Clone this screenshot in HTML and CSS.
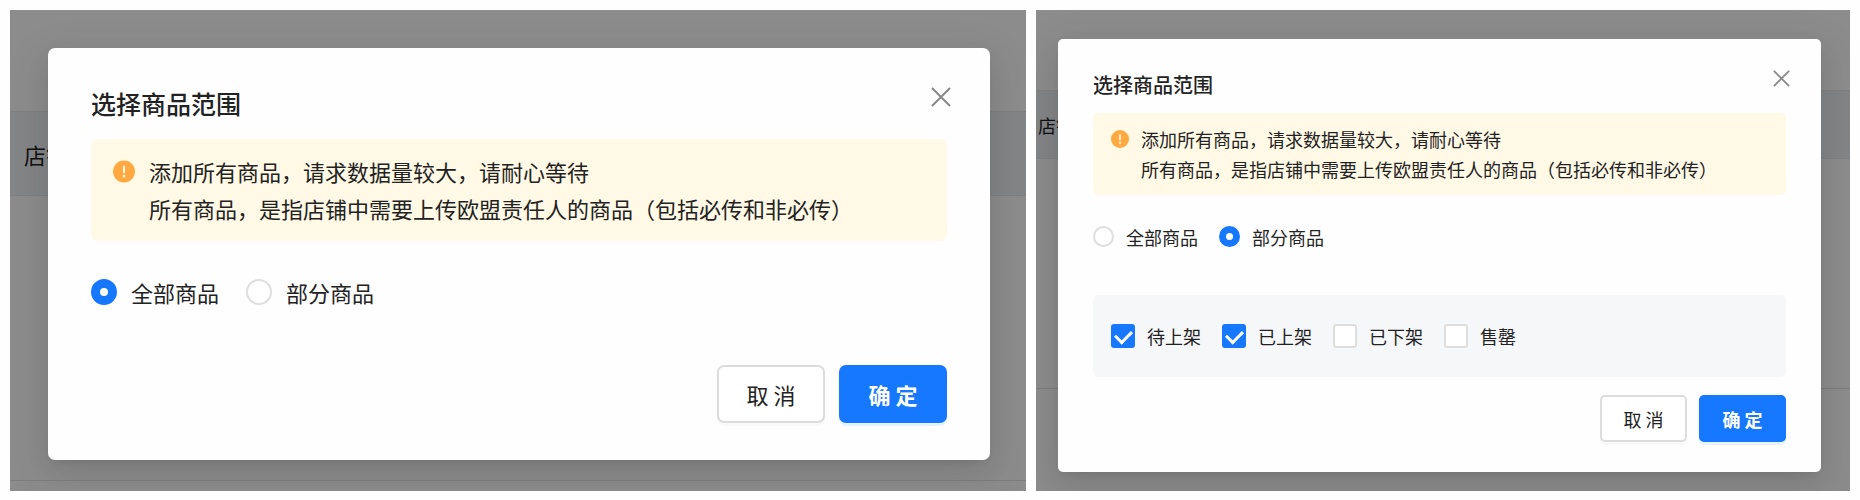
FILE: index.html
```html
<!DOCTYPE html>
<html lang="zh-CN">
  <head>
    <meta charset="UTF-8" />
    <meta name="viewport" content="width=device-width, initial-scale=1.0" />
    <title>选择商品范围</title>
    <link rel="stylesheet" href="styles.css">
  </head>
  <body>
    <div class="container">
      <section class="panel panel-large">
        <table class="shop-table">
          <thead>
            <tr><th>店铺</th></tr>
          </thead>
          <tbody>
            <tr><td></td></tr>
          </tbody>
        </table>

        <div class="mask">
          <div class="modal" role="dialog" aria-labelledby="title-all">
            <button class="close" type="button" aria-label="关闭">
              <svg viewBox="0 0 20 20"><path d="M1 1 L19 19 M19 1 L1 19" /></svg>
            </button>
            <h2 id="title-all">选择商品范围</h2>
            <div class="alert">
              <svg class="alert-icon" viewBox="0 0 22 22">
                <circle cx="11" cy="11" r="11" />
                <rect x="10" y="5" width="2" height="8" rx="1" />
                <circle class="dot" cx="11" cy="15.6" r="1.3" />
              </svg>
              <p>添加所有商品，请求数据量较大，请耐心等待<br />所有商品，是指店铺中需要上传欧盟责任人的商品（包括必传和非必传）</p>
            </div>
            <div class="options">
              <label><input type="radio" name="range-all" checked />全部商品</label>
              <label><input type="radio" name="range-all" />部分商品</label>
            </div>
            <div class="footer">
              <button class="btn" type="button">取 消</button>
              <button class="btn btn-primary" type="button">确 定</button>
            </div>
          </div>
        </div>
      </section>

      <section class="panel panel-small">
        <table class="shop-table">
          <thead>
            <tr><th>店铺</th></tr>
          </thead>
          <tbody>
            <tr><td></td></tr>
          </tbody>
        </table>

        <div class="mask">
          <div class="modal" role="dialog" aria-labelledby="title-part">
            <button class="close" type="button" aria-label="关闭">
              <svg viewBox="0 0 20 20"><path d="M1 1 L19 19 M19 1 L1 19" /></svg>
            </button>
            <h2 id="title-part">选择商品范围</h2>
            <div class="alert">
              <svg class="alert-icon" viewBox="0 0 22 22">
                <circle cx="11" cy="11" r="11" />
                <rect x="10" y="5" width="2" height="8" rx="1" />
                <circle class="dot" cx="11" cy="15.6" r="1.3" />
              </svg>
              <p>添加所有商品，请求数据量较大，请耐心等待<br />所有商品，是指店铺中需要上传欧盟责任人的商品（包括必传和非必传）</p>
            </div>
            <div class="options">
              <label><input type="radio" name="range-part" />全部商品</label>
              <label><input type="radio" name="range-part" checked />部分商品</label>
            </div>
            <div class="status">
              <label><input type="checkbox" checked />待上架</label>
              <label><input type="checkbox" checked />已上架</label>
              <label><input type="checkbox" />已下架</label>
              <label><input type="checkbox" />售罄</label>
            </div>
            <div class="footer">
              <button class="btn" type="button">取 消</button>
              <button class="btn btn-primary" type="button">确 定</button>
            </div>
          </div>
        </div>
      </section>
    </div>
  </body>
</html>
```
FILE: styles.css
```css
* {
  box-sizing: border-box;
}
body {
  font-family: "Noto Sans CJK SC", sans-serif;
  margin: 0;
  background: #fefefe;
  color: #222;
}
.container {
  display: grid;
  grid-template-columns: 1016fr 814fr;
  gap: 10px;
  min-height: 100vh;
  padding: 10px;
}
/* the list page and the mask share one grid cell */
.panel {
  display: grid;
  grid-template-columns: minmax(0, 1fr);
  overflow: hidden;
  background: #fff;
  font-size: var(--text);
}
.panel > * {
  grid-area: 1 / 1;
}
.panel-large {
  --text: 22px;
  --title: 25px;
  --title-line: 36px;
  --title-gap: 18px;
  --line: 37px;
  --mask-pad: 38px 36px 30px 38px;
  --modal-pad: 37px 43px;
  --alert-pad: 14px 22px;
  --icon: 22px;
  --gap: 14px;
  --radio: 26px;
  --dot: 8px;
  --option-gap: 27px;
  --option-top: 38px;
  --footer-top: 60px;
  --btn-width: 108px;
  --btn-height: 58px;
  --close: 20px;
  --close-top: 39px;
  --radius: 7px;
  --table-top: 101px;
  --th-height: 84px;
  --td-height: 285px;
  --th-pad: 14px;
}
.panel-small {
  --text: 18px;
  --title: 20px;
  --title-line: 32px;
  --title-gap: 12px;
  --line: 30px;
  --mask-pad: 29px 29px 19px 22px;
  --modal-pad: 30px 35px;
  --alert-pad: 11px 18px;
  --icon: 18px;
  --gap: 12px;
  --radio: 21px;
  --dot: 7px;
  --option-gap: 21px;
  --option-top: 31px;
  --footer-top: 18px;
  --btn-width: 87px;
  --btn-height: 47px;
  --close: 17px;
  --close-top: 31px;
  --radius: 5px;
  --table-top: 80px;
  --th-height: 68px;
  --td-height: 230px;
  --th-pad: 2px;
}
.shop-table {
  width: 100%;
  align-self: start;
  margin-top: var(--table-top);
  border-collapse: collapse;
}
.shop-table th {
  height: var(--th-height);
  padding: 0 var(--th-pad);
  background: #f0f3f6;
  border-top: 1px solid #e8eaed;
  border-bottom: 1px solid #e8eaed;
  font-weight: 400;
  text-align: left;
}
.shop-table td {
  height: var(--td-height);
  padding: 0;
  border-bottom: 1px solid #e4e4e4;
}
.mask {
  position: relative;
  padding: var(--mask-pad);
  background: rgba(0, 0, 0, 0.45);
}
.modal {
  position: relative;
  padding: var(--modal-pad);
  background: #fefefe;
  border-radius: var(--radius);
  box-shadow: 0 9px 25px rgba(0, 0, 0, 0.08), 0 5px 9px -6px rgba(0, 0, 0, 0.12),
    0 14px 43px 12px rgba(0, 0, 0, 0.05);
}
.modal h2 {
  margin: 0 0 var(--title-gap);
  font-size: var(--title);
  font-weight: 500;
  line-height: var(--title-line);
}
.close {
  position: absolute;
  top: var(--close-top);
  right: var(--close-top);
  width: var(--close);
  height: var(--close);
  padding: 0;
  border: none;
  background: none;
  cursor: pointer;
}
.close svg {
  display: block;
  fill: none;
  stroke: #888;
  stroke-width: 2;
}
.alert {
  display: flex;
  gap: var(--gap);
  padding: var(--alert-pad);
  background: #fff9e6;
  border-radius: var(--radius);
}
.alert p {
  margin: 0;
  line-height: var(--line);
}
.alert-icon {
  flex: none;
  width: var(--icon);
  height: var(--line);
  fill: #ffa940;
}
.alert-icon rect,
.alert-icon .dot {
  fill: #fff9e6;
}
.options,
.status {
  display: flex;
  gap: var(--option-gap);
}
.options {
  margin-top: var(--option-top);
}
.status {
  margin-top: 48px;
  padding: 29px 18px;
  background: #f5f7f9;
  border-radius: var(--radius);
}
label {
  display: flex;
  align-items: center;
  gap: var(--gap);
  line-height: 1;
  cursor: pointer;
}
input {
  appearance: none;
  display: grid;
  place-items: center;
  flex: none;
  margin: 0;
  border: 2px solid #dedede;
  background: #fff;
}
input:checked {
  border-color: #1677ff;
  background: #1677ff;
}
input[type="radio"] {
  width: var(--radio);
  height: var(--radio);
  border-radius: 50%;
}
input[type="radio"]:checked::after {
  content: "";
  width: var(--dot);
  height: var(--dot);
  border-radius: 50%;
  background: #fff;
}
input[type="checkbox"] {
  width: 24px;
  height: 24px;
  border-radius: 3px;
}
input[type="checkbox"]:checked::after {
  content: "";
  width: 8px;
  height: 13px;
  margin-bottom: 3px;
  border: solid #fff;
  border-width: 0 3px 3px 0;
  transform: rotate(45deg);
}
.footer {
  display: flex;
  justify-content: flex-end;
  gap: var(--gap);
  margin-top: var(--footer-top);
}
.btn {
  width: var(--btn-width);
  height: var(--btn-height);
  padding: 0;
  border: 2px solid #dcdcdc;
  border-radius: var(--radius);
  background: #fff;
  box-shadow: 0 3px 0 rgba(0, 0, 0, 0.02);
  color: #222;
  font-family: inherit;
  font-size: var(--text);
  cursor: pointer;
}
.btn-primary {
  border-color: #1677ff;
  background: #1677ff;
  box-shadow: 0 3px 0 rgba(5, 145, 255, 0.1);
  color: #fff;
  font-weight: 700;
}
```
